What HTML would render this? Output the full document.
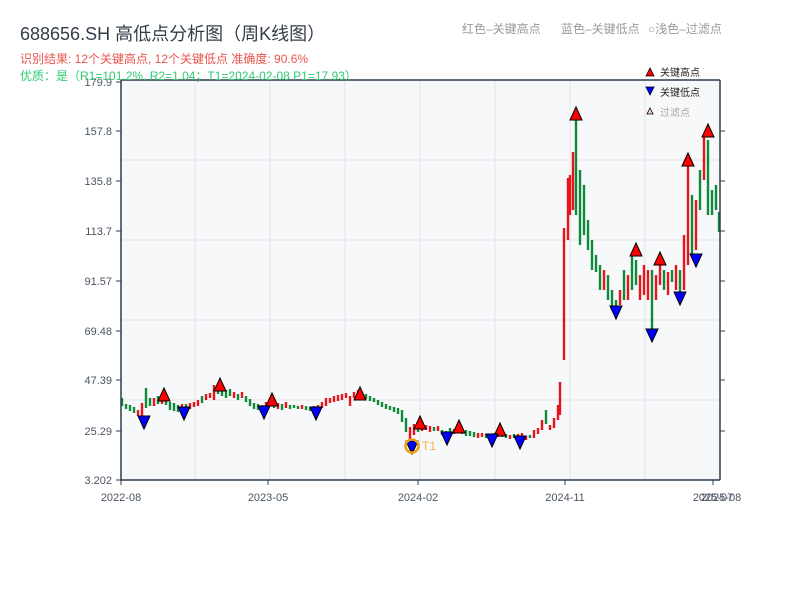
<!DOCTYPE html>
<html><head><meta charset="utf-8"><style>
body{margin:0;background:#fff;width:800px;height:600px;overflow:hidden;font-family:"Liberation Sans","Noto Sans CJK SC",sans-serif}
svg text{font-family:"Liberation Sans","Noto Sans CJK SC",sans-serif}
</style></head><body>
<svg width="800" height="600" xmlns="http://www.w3.org/2000/svg">
<rect x="121" y="80" width="599" height="400" fill="#f7f8fa"/>
<g stroke="#e3e5ea" stroke-width="1">
<line x1="195" y1="80" x2="195" y2="480"/><line x1="270" y1="80" x2="270" y2="480"/><line x1="345" y1="80" x2="345" y2="480"/><line x1="420" y1="80" x2="420" y2="480"/><line x1="495" y1="80" x2="495" y2="480"/><line x1="570" y1="80" x2="570" y2="480"/><line x1="645" y1="80" x2="645" y2="480"/>
<line x1="121" y1="160" x2="720" y2="160"/><line x1="121" y1="240" x2="720" y2="240"/><line x1="121" y1="320" x2="720" y2="320"/><line x1="121" y1="400" x2="720" y2="400"/>
</g>
<path stroke="#0f8a3a" stroke-width="2.4" fill="none" d="M122,398V406M126,404V409M130,405V411M134,407V413M146,388V408M150,398V406M158,396V404M166,399V405M170,402V410M174,403V411M178,405V412M186,404V410M202,396V403M218,386V394M222,388V396M226,390V398M230,389V396M238,394V400M246,396V402M250,399V406M254,403V409M258,404V410M262,405V410M274,402V408M282,404V410M290,405V409M294,405V408M298,406V409M306,406V410M310,407V411M314,406V410M362,393V398M366,394V399M370,396V401M374,398V402M378,400V405M382,402V407M386,404V409M390,406V410M394,407V412M398,408V414M402,410V422M406,418V432M418,424V432M434,427V431M442,430V435M446,431V436M450,428V433M462,429V434M466,430V436M470,431V436M474,432V437M486,434V438M494,433V436M502,432V437M506,434V438M514,434V438M530,435V438M546,410V424M576,120V215M580,170V245M584,185V235M588,220V250M592,240V270M596,255V272M600,265V290M608,275V300M612,290V310M616,300V312M624,270V300M632,255V290M636,260V285M652,270V340M664,270V290M672,270V282M680,270V295M692,195V255M700,170V210M708,140V215M712,190V215M716,185V210M719,212V232"/>
<path stroke="#e8141c" stroke-width="2.4" fill="none" d="M138,410V416M142,403V418M154,398V406M162,398V404M182,404V410M190,403V409M194,402V407M198,400V406M206,394V400M210,393V398M214,385V400M234,392V398M242,392V398M266,402V408M270,398V406M278,403V409M286,402V408M302,405V409M318,405V412M322,402V408M326,398V406M330,398V403M334,396V402M338,395V401M342,394V400M346,393V398M350,396V406M354,392V398M358,390V396M410,427V440M414,424V435M422,425V431M426,425V430M430,426V432M438,426V431M454,429V434M458,428V432M478,433V438M482,433V437M490,435V440M498,432V437M510,435V439M518,434V439M522,433V438M526,436V440M534,430V438M538,428V434M542,420V430M550,425V430M554,418V428M558,405V420M560,382V415M564,228V360M568,178V240M570,175V215M573,152V210M604,270V290M620,290V305M628,275V300M640,275V300M644,265V295M648,270V300M656,275V300M660,255V285M668,272V295M676,265V290M684,235V290M688,160V265M696,200V250M704,135V180"/>
<g stroke="#2c3e50" stroke-width="1.5" fill="none">
<line x1="121" y1="80" x2="720" y2="80"/><line x1="121" y1="80" x2="121" y2="481"/><line x1="120" y1="480" x2="720" y2="480"/><line x1="720" y1="80" x2="720" y2="480"/>
</g>
<g stroke="#2c3e50" stroke-width="1">
<line x1="116" y1="82" x2="121" y2="82"/><line x1="116" y1="131" x2="121" y2="131"/><line x1="116" y1="181" x2="121" y2="181"/><line x1="116" y1="231" x2="121" y2="231"/><line x1="116" y1="281" x2="121" y2="281"/><line x1="116" y1="331" x2="121" y2="331"/><line x1="116" y1="380" x2="121" y2="380"/><line x1="116" y1="431" x2="121" y2="431"/><line x1="116" y1="480" x2="121" y2="480"/>
<line x1="720" y1="131" x2="725" y2="131"/><line x1="720" y1="181" x2="725" y2="181"/><line x1="720" y1="231" x2="725" y2="231"/><line x1="720" y1="281" x2="725" y2="281"/><line x1="720" y1="331" x2="725" y2="331"/><line x1="720" y1="380" x2="725" y2="380"/><line x1="720" y1="431" x2="725" y2="431"/>
<line x1="121" y1="480" x2="121" y2="485"/><line x1="268" y1="480" x2="268" y2="485"/><line x1="418" y1="480" x2="418" y2="485"/><line x1="565" y1="480" x2="565" y2="485"/><line x1="713" y1="480" x2="713" y2="485"/>
</g>
<g font-size="11" fill="#4a5563" text-anchor="end">
<text x="112" y="86">179.9</text><text x="112" y="135">157.8</text><text x="112" y="185">135.8</text><text x="112" y="235">113.7</text><text x="112" y="285">91.57</text><text x="112" y="335">69.48</text><text x="112" y="384">47.39</text><text x="112" y="435">25.29</text><text x="112" y="484">3.202</text>
</g>
<g font-size="11" fill="#4a5563" text-anchor="middle">
<text x="121" y="501">2022-08</text><text x="268" y="501">2023-05</text><text x="418" y="501">2024-02</text><text x="565" y="501">2024-11</text><text x="713" y="501">2025-07</text><text x="721" y="501">2025-08</text>
</g>
<g fill="#f00" stroke="#000" stroke-width="1">
<polygon points="158,401 170,401 164,388"/><polygon points="214,391 226,391 220,378"/><polygon points="266,406 278,406 272,393"/><polygon points="354,400 366,400 360,387"/><polygon points="414,429 426,429 420,416"/><polygon points="453,433 465,433 459,420"/><polygon points="494,436 506,436 500,423"/><polygon points="570,120 582,120 576,107"/><polygon points="630,256 642,256 636,243"/><polygon points="654,265 666,265 660,252"/><polygon points="682,166 694,166 688,153"/><polygon points="702,137 714,137 708,124"/>
</g>
<g fill="#00f" stroke="#000" stroke-width="1">
<polygon points="138,416 150,416 144,429"/><polygon points="178,407 190,407 184,420"/><polygon points="258,406 270,406 264,419"/><polygon points="310,407 322,407 316,420"/><polygon points="406,441 418,441 412,454"/><polygon points="441,432 453,432 447,445"/><polygon points="486,434 498,434 492,447"/><polygon points="514,436 526,436 520,449"/><polygon points="610,306 622,306 616,319"/><polygon points="646,329 658,329 652,342"/><polygon points="674,292 686,292 680,305"/><polygon points="690,254 702,254 696,267"/>
</g>
<circle cx="412" cy="446" r="6.5" fill="none" stroke="#f39c12" stroke-width="2.5"/>
<text x="422" y="450" font-size="12" fill="#f5b041">T1</text>
<text x="20" y="40" font-size="18" fill="#333d4a">688656.SH 高低点分析图（周K线图）</text>
<text x="20" y="63" font-size="12" fill="#e8554e">识别结果: 12个关键高点, 12个关键低点   准确度: 90.6%</text>
<text x="20" y="80" font-size="12" fill="#2ecc71">优质：是（R1=101.2%, R2=1.04；T1=2024-02-08 P1=17.93）</text>
<g font-size="12" fill="#999">
<text x="462" y="33">红色–关键高点</text><text x="561" y="33">蓝色–关键低点</text><text x="648" y="33">○浅色–过滤点</text>
</g>
<polygon points="646,76 654,76 650,68" fill="#f00" stroke="#000" stroke-width="0.8"/>
<text x="660" y="76" font-size="10" fill="#222">关键高点</text>
<polygon points="646,87 654,87 650,95" fill="#00f" stroke="#000" stroke-width="0.8"/>
<text x="660" y="96" font-size="10" fill="#222">关键低点</text>
<polygon points="647,114 653,114 650,108" fill="#fcc" stroke="#000" stroke-width="0.8"/>
<text x="660" y="116" font-size="10" fill="#aaa">过滤点</text>
</svg>
</body></html>
